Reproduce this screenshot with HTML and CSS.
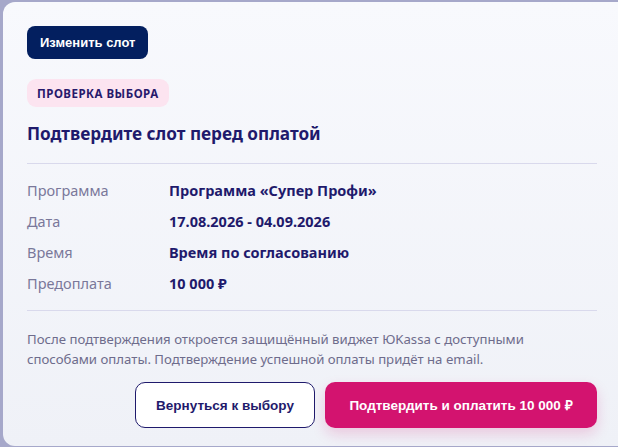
FILE: index.html
```html
<!DOCTYPE html>
<html lang="ru">
<head>
<meta charset="utf-8">
<link rel="stylesheet" href="styles.css">
</head>
<body>
<div class="backdrop">
  <section class="card">
    <button class="btn-change">Изменить слот</button>
    <span class="badge">ПРОВЕРКА ВЫБОРА</span>
    <h2 class="title">Подтвердите слот перед оплатой</h2>
    <dl class="details">
      <dt>Программа</dt><dd>Программа «Супер Профи»</dd>
      <dt>Дата</dt><dd>17.08.2026 - 04.09.2026</dd>
      <dt>Время</dt><dd>Время по согласованию</dd>
      <dt>Предоплата</dt><dd>10 000 ₽</dd>
    </dl>
    <p class="note">После подтверждения откроется защищённый виджет ЮKassa с доступными способами оплаты. Подтверждение успешной оплаты придёт на email.</p>
    <div class="actions">
      <button class="btn-back">Вернуться к выбору</button>
      <button class="btn-pay">Подтвердить и оплатить 10 000 ₽</button>
    </div>
  </section>
</div>
</body>
</html>
```

FILE: styles.css
```css
* { box-sizing: border-box; }
html, body { margin: 0; padding: 0; }
body {
  width: 618px;
  height: 447px;
  overflow: hidden;
  background: #a6a8ca;
  font-family: "Noto Sans", "Open Sans", sans-serif;
}
.backdrop {
  padding: 2px 0 0 3px;
}
.card {
  height: 444px;
  border-radius: 12px 0 0 12px;
  background: linear-gradient(180deg, #f8f9fd 0%, #eff1f7 100%);
  padding: 24px 21px 0 24px;
  display: flex;
  flex-direction: column;
  align-items: flex-start;
}
.btn-change {
  height: 33px;
  padding: 0 13px;
  border: none;
  border-radius: 8px;
  background: #031f5f;
  color: #fff;
  font-family: "Liberation Sans", Arial, sans-serif;
  font-weight: 700;
  font-size: 13px;
}
.badge {
  margin-top: 20px;
  height: 28px;
  display: inline-flex;
  align-items: center;
  padding: 0 10px;
  border-radius: 9px;
  background: #fce4f0;
  color: #27196b;
  font-size: 11.5px;
  font-weight: 700;
  letter-spacing: 0.5px;
}
.title {
  margin: 14px 0 0;
  font-size: 17.2px;
  line-height: 26px;
  font-weight: 700;
  color: #1f1a6c;
}
.details {
  align-self: stretch;
  margin: 16px 0 0;
  padding: 15px 0 16px;
  border-top: 1px solid #d9d9ec;
  border-bottom: 1px solid #d9d9ec;
  display: grid;
  grid-template-columns: 142px 1fr;
  row-gap: 9px;
  font-size: 14.5px;
  line-height: 22px;
}
.details dt {
  color: #7a789a;
}
.details dd {
  margin: 0;
  font-weight: 700;
  color: #1f1a6c;
}
.note {
  margin: 18px 0 0;
  font-size: 13.2px;
  line-height: 20px;
  color: #6e6c8c;
  max-width: 520px;
}
.actions {
  align-self: stretch;
  margin-top: 13px;
  display: flex;
  justify-content: flex-end;
  gap: 10px;
}
.actions button {
  height: 46px;
  border-radius: 10px;
  font-family: "Liberation Sans", Arial, sans-serif;
  font-weight: 700;
  font-size: 13.5px;
}
.btn-back {
  width: 180px;
  background: #fff;
  border: 1px solid #1f1a6c;
  color: #1f1a6c;
}
.btn-pay {
  width: 272px;
  border: none;
  background: #d3136f;
  color: #fff;
  font-size: 13.8px;
  box-shadow: 0 6px 14px rgba(211, 19, 111, 0.18);
}
```
